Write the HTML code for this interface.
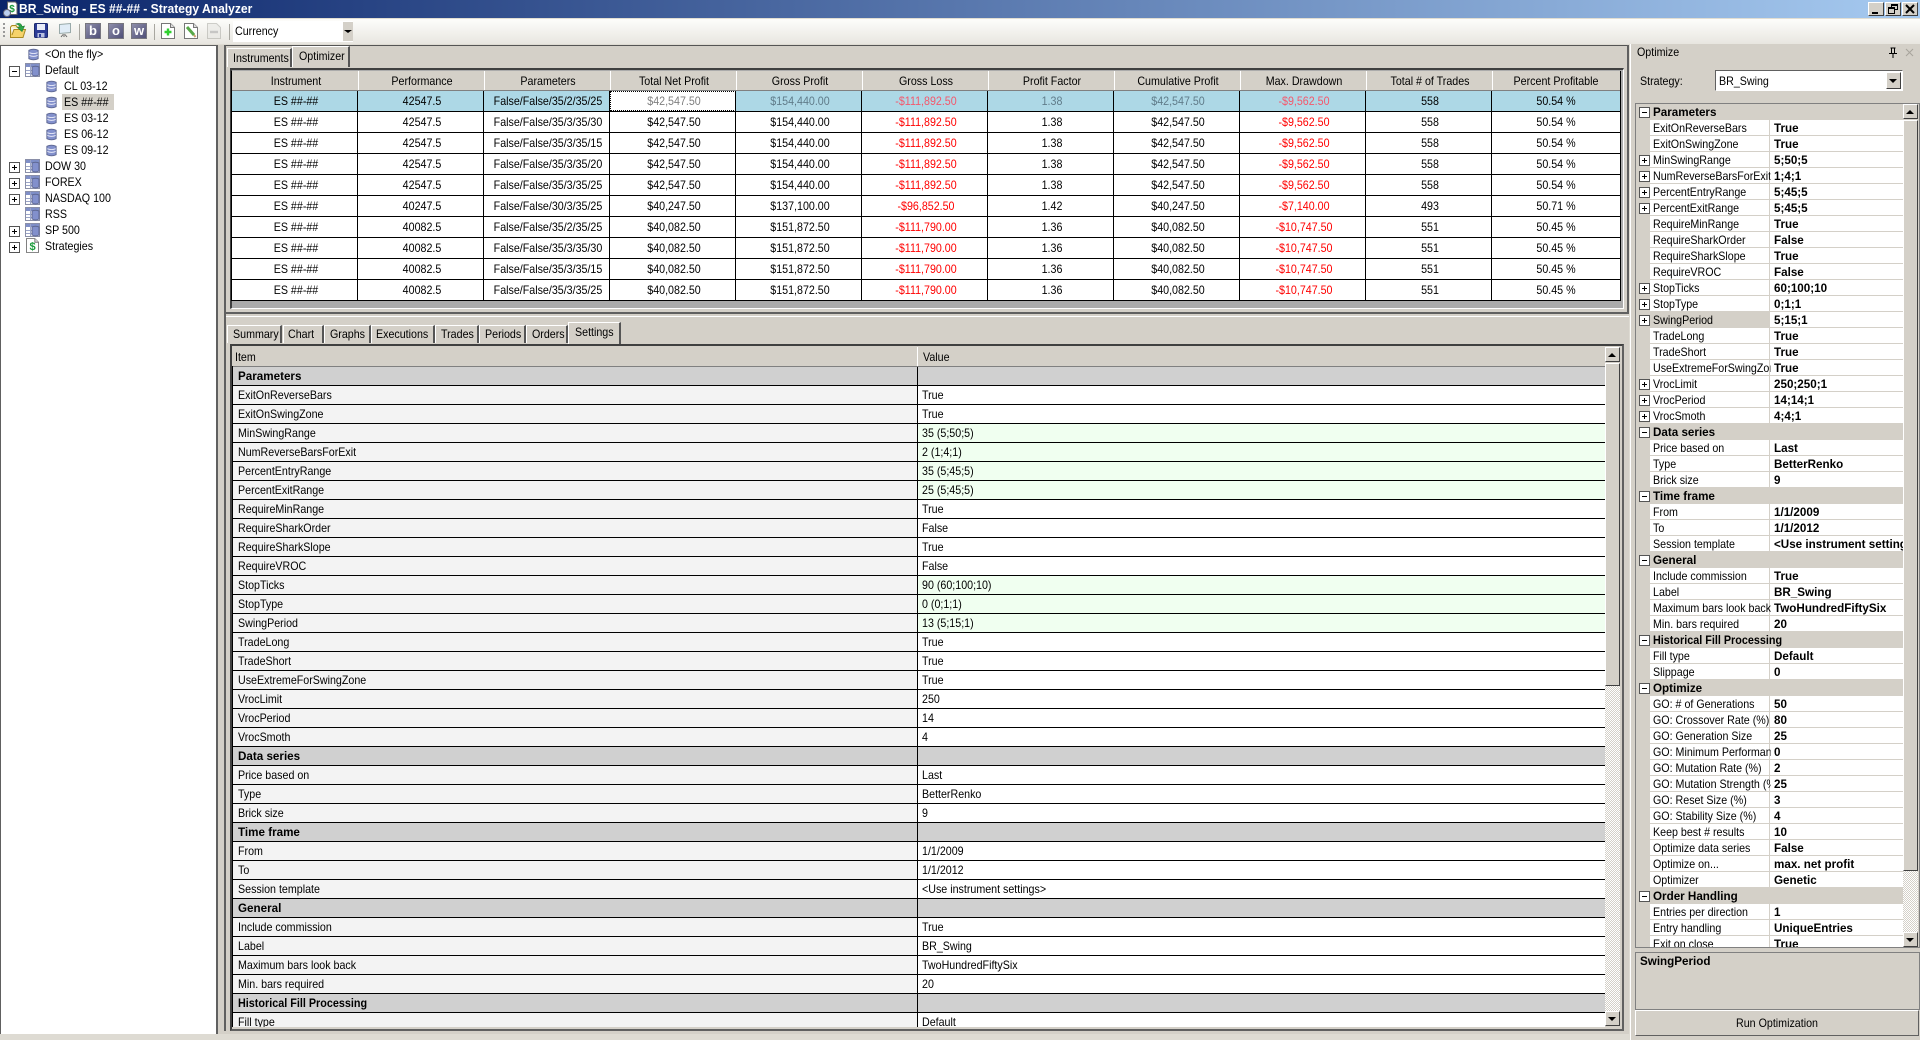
<!DOCTYPE html>
<html><head><meta charset="utf-8"><title>BR_Swing - ES ##-## - Strategy Analyzer</title>
<style>
*{box-sizing:border-box}
html,body{margin:0;padding:0}
body{width:1920px;height:1040px;overflow:hidden;position:relative;background:#dedbd3;font:12px/16px "Liberation Sans",sans-serif;color:#000}
.a{position:absolute}
.t{position:absolute;white-space:nowrap;transform:scaleX(.89);transform-origin:0 50%}
.c{text-align:center;transform-origin:50% 50%}
.bd{font-weight:bold;transform:scaleX(.97)}
.title{left:0;top:0;width:1920px;height:18px;background:linear-gradient(90deg,#0a246a,#a6caf0)}
.tt{left:19px;top:1px;color:#fff;font:bold 13px/16px "Liberation Sans",sans-serif;transform:scaleX(.93)}
.wb{top:2px;width:16px;height:14px;background:#d4d0c8;border:1px solid;border-color:#fff #404040 #404040 #fff}
.bar{left:0;top:18px;width:1920px;height:26px;background:linear-gradient(#fdfdfb,#e8e6e0);border-top:1px solid #e2ded2}
.sep{top:24px;width:1px;height:16px;background:#a8a7a0}
.bw{top:23px;width:16px;height:16px;background:linear-gradient(135deg,#8e8eaa,#4f4f78);border:1px solid #77767f;color:#fff;font:bold 13px/13px "Liberation Sans",sans-serif;text-align:center}
.tree{left:0;top:45px;width:216px;height:989px;background:#fff;border-left:1px solid #606060;border-top:1px solid #606060}
.tr{position:absolute;height:16px}
.x::before{content:"";position:absolute;width:9px;height:9px;border:1px solid #555;background:linear-gradient(#000,#000) center/5px 1px no-repeat,linear-gradient(#000,#000) center/1px 5px no-repeat,#fff}
.m::before{content:"";position:absolute;width:9px;height:9px;border:1px solid #555;background:linear-gradient(#000,#000) center/5px 1px no-repeat,#fff}
.tree .x::before,.tree .m::before{left:8px;top:4px}
.gg{left:230px;top:68px;width:1394px;height:241px;background:#ababab;border-top:2px solid #404040;border-left:2px solid #404040;border-right:1px solid #fff;border-bottom:1px solid #fff}
.h{left:232px;top:71px;width:1388px;height:20px;background:#d4d0c8;border-bottom:1px solid #808080}
.h .t{top:2px;width:126px}
.g{left:232px;top:91px;width:1388px}
.g .r{position:relative;height:21px;background:#fff;border-bottom:1px solid #000}
.g .r .t{top:2px;width:126px}
.k .t:nth-child(1){left:1px}.k .t:nth-child(2){left:127px}.k .t:nth-child(3){left:253px}.k .t:nth-child(4){left:379px}.k .t:nth-child(5){left:505px}.k .t:nth-child(6){left:631px}.k .t:nth-child(7){left:757px}.k .t:nth-child(8){left:883px}.k .t:nth-child(9){left:1009px}.k .t:nth-child(10){left:1135px}.k .t:nth-child(11){left:1261px}
.g .t:nth-child(6),.g .t:nth-child(9){color:#f00}
.g .r.s{background:#add8e6}
.v{width:1px;background:#000}
.hv{width:1px;height:19px;background:#fff;top:71px}
.ph{top:1px}
.tab{background:#d4d0c8;border-top:1px solid #fff;border-left:1px solid #fff;border-right:2px solid #555}
.ig{left:232px;top:347px;width:1373px;height:20px;background:#d4d0c8;border-bottom:1px solid #808080}
.l{left:233px;top:367px;width:1372px;height:660px;overflow:hidden}
.l .r{position:relative;height:19px;background:linear-gradient(90deg,#f3f3f3 684px,#000 684px,#000 685px,#fff 685px);border-bottom:1px solid #000}
.l .r .t{top:1px;left:5px}
.l .r .t+.t{left:689px}
.l .q{background:linear-gradient(90deg,#f3f3f3 684px,#000 684px,#000 685px,#f0fff0 685px)}
.l .o{background:linear-gradient(90deg,#d0d0d0 684px,#000 684px,#000 685px,#d0d0d0 685px)}
.l .o .t{font-weight:bold;transform:scaleX(.97)}
.btn{background:#d4d0c8;border:1px solid;border-color:#fff #404040 #404040 #fff}
.tri{position:absolute;left:3px;width:0;height:0;border-left:4px solid transparent;border-right:4px solid transparent}
.up{border-bottom:4px solid #000;top:5px}.dn{border-top:4px solid #000;top:5px}
.chk{background:repeating-conic-gradient(#fff 0 25%,#d4d0c8 0 50%) 0 0/2px 2px}
.rp{left:1630px;top:44px;width:290px;height:996px;background:#d4d0c8;border-left:1px solid #fff}
.pg{left:1636px;top:104px;width:267px;height:843px;overflow:hidden;background:#d4d0c8}
.pg .r{position:relative;height:16px;background:linear-gradient(90deg,#d4d0c8 14px,#fff 14px,#fff 133px,#d4d0c8 133px,#d4d0c8 134px,#fff 134px);border-bottom:1px solid #d4d0c8}
.pg .r .t{left:17px;top:0;max-width:132px;overflow:hidden}
.pg .r .t+.t{left:138px;max-width:none;font-weight:bold;transform:scaleX(.97)}
.pg .o{background:#d4d0c8!important;height:16px}
.pg .r.o .t{font-weight:bold;transform:scaleX(.97);max-width:none}
.pg .x::before,.pg .m::before{left:3px;top:3px}
.pg .y{background:linear-gradient(90deg,#d4d0c8 134px,#fff 134px)}
</style></head><body>
<svg width="0" height="0" style="position:absolute"><defs>
<symbol id="db" viewBox="0 0 11 14"><path d="M.5 2.500Q5.500 0 10.500 2.500V11.500Q5.500 14 .5 11.500Z" fill="#8290cc" stroke="#5d6690"/><path d="M1 5Q5.500 7 10 5M1 8Q5.500 10 10 8" fill="none" stroke="#e8eaf8"/></symbol>
<symbol id="ls" viewBox="0 0 15 14"><rect x=".5" y=".5" width="14" height="13" fill="#fff" stroke="#8a8fa8"/><rect x="1" y="1" width="13" height="3" fill="#7f8fc8"/><path d="M5.500 1V13M1 7.500H14M1 10.500H14" stroke="#9aa4c8"/><path d="M7 4Q10.500 2.500 14 4V12Q10.500 14 7 12Z" fill="#8290cc" stroke="#5d6690"/></symbol>
<symbol id="doc" viewBox="0 0 14 16"><path d="M.5.5H9.500L13.500 4.500V15.500H.5Z" fill="#fff" stroke="#777"/><path d="M9.500.5V4.500H13.500" fill="#ddd" stroke="#777"/></symbol>
</defs></svg>

<div class="a title"></div>
<svg class="a" style="left:2px;top:1px" width="16" height="17"><path d="M5.500 1H13.500L15 3V13.500H5.500Z" fill="#fff" stroke="#666"/><text x="10" y="11" font-family="Liberation Sans" font-size="10" font-weight="bold" fill="#1a9a3a" text-anchor="middle">$</text><circle cx="5" cy="12" r="3.500" fill="#bcd0f0" stroke="#667"/></svg>
<div class="a t tt" style="transform-origin:0 50%">BR_Swing - ES ##-## - Strategy Analyzer</div>
<div class="a wb" style="left:1868px"><div class="a" style="left:3px;top:9px;width:6px;height:2px;background:#000"></div></div>
<div class="a wb" style="left:1885px"><div class="a" style="left:5px;top:1px;width:7px;height:6px;border:1px solid #000;border-top-width:2px"></div><div class="a" style="left:2px;top:4px;width:7px;height:7px;border:1px solid #000;border-top-width:2px;background:#d4d0c8"></div></div>
<div class="a wb" style="left:1902px"><svg class="a" style="left:2px;top:1px" width="10" height="10"><path d="M1 1L9 9M9 1L1 9" stroke="#000" stroke-width="2"/></svg></div>

<div class="a bar"></div>
<div class="a" style="left:3px;top:23px;width:2px;height:15px;background:repeating-linear-gradient(#999 0 2px,transparent 2px 4px)"></div>
<svg class="a" style="left:9px;top:21px" width="18" height="18"><path d="M1.500 6V16.500H14L16.500 8.500H5L3 14" fill="#f6d36a" stroke="#a98a22"/><path d="M1.500 6L3 4.500H7L8 6H13V8" fill="#fbe9a0" stroke="#a98a22"/><path d="M7 3Q12 1 13 5.500L15.500 5L13 10.500L8.500 6.500L11 6Q10 3.500 7 3Z" fill="#2ea84a" stroke="#1a7a30" stroke-width=".6"/></svg>
<svg class="a" style="left:34px;top:23px" width="14" height="15"><rect x=".5" y=".5" width="13" height="14" rx="1" fill="#2c3c96" stroke="#1c2a70"/><rect x="3" y="1" width="8" height="6" fill="#e8ecf8"/><rect x="3.500" y="10" width="7" height="4.500" fill="#b8c0e0"/><rect x="5" y="11" width="2" height="3" fill="#2c3c96"/></svg>
<svg class="a" style="left:58px;top:23px" width="14" height="15"><path d="M1.500 1.500L12.500 .5V9.500L1.500 10.500Z" fill="#e0ecf6" stroke="#9aa"/><path d="M6 11V14M3 14L5 11.500M9 14L7 11.500" stroke="#666" fill="none"/></svg>
<div class="a sep" style="left:79px"></div>
<div class="a bw" style="left:85px">b</div><div class="a bw" style="left:108px">o</div><div class="a bw" style="left:131px">w</div>
<div class="a sep" style="left:154px"></div>
<svg class="a" style="left:161px;top:23px" width="14" height="16"><use href="#doc"/><path d="M7 5.500V12.500M3.500 9H10.500" stroke="#30d030" stroke-width="2.400"/></svg>
<svg class="a" style="left:184px;top:23px" width="14" height="16"><use href="#doc"/><path d="M3 4L10 12" stroke="#58a848" stroke-width="3"/><path d="M10 12L11.500 14" stroke="#d0a070" stroke-width="2"/></svg>
<svg class="a" style="left:207px;top:23px;opacity:.6" width="14" height="16"><path d="M.5.500H9.500L13.500 4.500V15.500H.5Z" fill="#e8e8e4" stroke="#b0b0aa"/><path d="M3 9H11" stroke="#aaa" stroke-width="2.400"/></svg>
<div class="a sep" style="left:229px"></div>
<div class="a" style="left:233px;top:21px;width:120px;height:21px;background:#fff"></div>
<div class="a" style="left:343px;top:22px;width:10px;height:19px;background:#d4d0c8"><div class="tri dn" style="left:1px;top:8px;border-width:3px 4px 0;"></div></div>
<div class="a t" style="left:235px;top:23px">Currency</div>

<div class="a tree">
<div class="a" style="left:61px;top:48px;width:52px;height:16px;background:#d4d0c8"></div>
<div class="tr" style="left:0;top:0"><svg class="a" style="left:27px;top:2px" width="11" height="13"><use href="#db"/></svg><span class="t" style="left:44px">&lt;On the fly&gt;</span></div>
<div class="tr m" style="left:0;top:16px"><svg class="a" style="left:24px;top:1px" width="15" height="14"><use href="#ls"/></svg><span class="t" style="left:44px">Default</span></div>
<div class="tr" style="left:0;top:32px"><svg class="a" style="left:45px;top:2px" width="11" height="13"><use href="#db"/></svg><span class="t" style="left:63px">CL 03-12</span></div>
<div class="tr" style="left:0;top:48px"><svg class="a" style="left:45px;top:2px" width="11" height="13"><use href="#db"/></svg><span class="t" style="left:63px">ES ##-##</span></div>
<div class="tr" style="left:0;top:64px"><svg class="a" style="left:45px;top:2px" width="11" height="13"><use href="#db"/></svg><span class="t" style="left:63px">ES 03-12</span></div>
<div class="tr" style="left:0;top:80px"><svg class="a" style="left:45px;top:2px" width="11" height="13"><use href="#db"/></svg><span class="t" style="left:63px">ES 06-12</span></div>
<div class="tr" style="left:0;top:96px"><svg class="a" style="left:45px;top:2px" width="11" height="13"><use href="#db"/></svg><span class="t" style="left:63px">ES 09-12</span></div>
<div class="tr x" style="left:0;top:112px"><svg class="a" style="left:24px;top:1px" width="15" height="14"><use href="#ls"/></svg><span class="t" style="left:44px">DOW 30</span></div>
<div class="tr x" style="left:0;top:128px"><svg class="a" style="left:24px;top:1px" width="15" height="14"><use href="#ls"/></svg><span class="t" style="left:44px">FOREX</span></div>
<div class="tr x" style="left:0;top:144px"><svg class="a" style="left:24px;top:1px" width="15" height="14"><use href="#ls"/></svg><span class="t" style="left:44px">NASDAQ 100</span></div>
<div class="tr" style="left:0;top:160px"><svg class="a" style="left:24px;top:1px" width="15" height="14"><use href="#ls"/></svg><span class="t" style="left:44px">RSS</span></div>
<div class="tr x" style="left:0;top:176px"><svg class="a" style="left:24px;top:1px" width="15" height="14"><use href="#ls"/></svg><span class="t" style="left:44px">SP 500</span></div>
<div class="tr x" style="left:0;top:192px"><svg class="a" style="left:25px;top:0" width="13" height="15"><use href="#doc"/><text x="6.500" y="12" font-family="Liberation Sans" font-size="11" font-weight="bold" fill="#1a9a3a" text-anchor="middle">$</text></svg><span class="t" style="left:44px">Strategies</span></div>
</div>

<div class="a" style="left:216px;top:45px;width:1413px;height:989px;background:#d4d0c8"></div>
<div class="a" style="left:216px;top:45px;width:2px;height:989px;background:#606060"></div>
<div class="a" style="left:224px;top:45px;width:2px;height:986px;background:#606060"></div>
<div class="a" style="left:226px;top:45px;width:1403px;height:1px;background:#555"></div>

<div class="a tab" style="left:227px;top:48px;width:65px;height:19px"></div>
<div class="a tab" style="left:292px;top:46px;width:58px;height:21px"></div>
<div class="a t" style="left:233px;top:50px">Instruments</div>
<div class="a t" style="left:299px;top:48px">Optimizer</div>

<div class="a gg"></div>
<div class="a h k">
<span class="t c ph">Instrument</span><span class="t c ph">Performance</span><span class="t c ph">Parameters</span><span class="t c ph">Total Net Profit</span><span class="t c ph">Gross Profit</span><span class="t c ph">Gross Loss</span><span class="t c ph">Profit Factor</span><span class="t c ph">Cumulative Profit</span><span class="t c ph">Max. Drawdown</span><span class="t c ph">Total # of Trades</span><span class="t c ph">Percent Profitable</span>
</div>
<div class="a g k">
<div class="r s"><div class="a" style="left:378px;top:0;width:126px;height:20px;background:#fff;border:1px dotted #000"></div></div>
<div class="a" style="left:0;top:0;width:1388px;height:20px"><span class="t c" style="top:2px;width:126px">ES ##-##</span><span class="t c" style="top:2px;width:126px">42547.5</span><span class="t c" style="top:2px;width:126px">False/False/35/2/35/25</span><span class="t c" style="top:2px;width:126px;color:#808080">$42,547.50</span><span class="t c" style="top:2px;width:126px;color:#607c8a">$154,440.00</span><span class="t c" style="top:2px;width:126px;color:#f4586c">-$111,892.50</span><span class="t c" style="top:2px;width:126px;color:#607c8a">1.38</span><span class="t c" style="top:2px;width:126px;color:#607c8a">$42,547.50</span><span class="t c" style="top:2px;width:126px;color:#f4586c">-$9,562.50</span><span class="t c" style="top:2px;width:126px">558</span><span class="t c" style="top:2px;width:126px">50.54 %</span></div>
<div class="r"><span class="t c">ES ##-##</span><span class="t c">42547.5</span><span class="t c">False/False/35/3/35/30</span><span class="t c">$42,547.50</span><span class="t c">$154,440.00</span><span class="t c">-$111,892.50</span><span class="t c">1.38</span><span class="t c">$42,547.50</span><span class="t c">-$9,562.50</span><span class="t c">558</span><span class="t c">50.54 %</span></div>
<div class="r"><span class="t c">ES ##-##</span><span class="t c">42547.5</span><span class="t c">False/False/35/3/35/15</span><span class="t c">$42,547.50</span><span class="t c">$154,440.00</span><span class="t c">-$111,892.50</span><span class="t c">1.38</span><span class="t c">$42,547.50</span><span class="t c">-$9,562.50</span><span class="t c">558</span><span class="t c">50.54 %</span></div>
<div class="r"><span class="t c">ES ##-##</span><span class="t c">42547.5</span><span class="t c">False/False/35/3/35/20</span><span class="t c">$42,547.50</span><span class="t c">$154,440.00</span><span class="t c">-$111,892.50</span><span class="t c">1.38</span><span class="t c">$42,547.50</span><span class="t c">-$9,562.50</span><span class="t c">558</span><span class="t c">50.54 %</span></div>
<div class="r"><span class="t c">ES ##-##</span><span class="t c">42547.5</span><span class="t c">False/False/35/3/35/25</span><span class="t c">$42,547.50</span><span class="t c">$154,440.00</span><span class="t c">-$111,892.50</span><span class="t c">1.38</span><span class="t c">$42,547.50</span><span class="t c">-$9,562.50</span><span class="t c">558</span><span class="t c">50.54 %</span></div>
<div class="r"><span class="t c">ES ##-##</span><span class="t c">40247.5</span><span class="t c">False/False/30/3/35/25</span><span class="t c">$40,247.50</span><span class="t c">$137,100.00</span><span class="t c">-$96,852.50</span><span class="t c">1.42</span><span class="t c">$40,247.50</span><span class="t c">-$7,140.00</span><span class="t c">493</span><span class="t c">50.71 %</span></div>
<div class="r"><span class="t c">ES ##-##</span><span class="t c">40082.5</span><span class="t c">False/False/35/2/35/25</span><span class="t c">$40,082.50</span><span class="t c">$151,872.50</span><span class="t c">-$111,790.00</span><span class="t c">1.36</span><span class="t c">$40,082.50</span><span class="t c">-$10,747.50</span><span class="t c">551</span><span class="t c">50.45 %</span></div>
<div class="r"><span class="t c">ES ##-##</span><span class="t c">40082.5</span><span class="t c">False/False/35/3/35/30</span><span class="t c">$40,082.50</span><span class="t c">$151,872.50</span><span class="t c">-$111,790.00</span><span class="t c">1.36</span><span class="t c">$40,082.50</span><span class="t c">-$10,747.50</span><span class="t c">551</span><span class="t c">50.45 %</span></div>
<div class="r"><span class="t c">ES ##-##</span><span class="t c">40082.5</span><span class="t c">False/False/35/3/35/15</span><span class="t c">$40,082.50</span><span class="t c">$151,872.50</span><span class="t c">-$111,790.00</span><span class="t c">1.36</span><span class="t c">$40,082.50</span><span class="t c">-$10,747.50</span><span class="t c">551</span><span class="t c">50.45 %</span></div>
<div class="r"><span class="t c">ES ##-##</span><span class="t c">40082.5</span><span class="t c">False/False/35/3/35/25</span><span class="t c">$40,082.50</span><span class="t c">$151,872.50</span><span class="t c">-$111,790.00</span><span class="t c">1.36</span><span class="t c">$40,082.50</span><span class="t c">-$10,747.50</span><span class="t c">551</span><span class="t c">50.45 %</span></div>
</div>
<div class="a" style="left:231px;top:71px;width:1px;height:230px;background:#000"></div>
<div class="a v" style="left:357px;top:91px;height:210px"></div><div class="a v" style="left:483px;top:91px;height:210px"></div><div class="a v" style="left:609px;top:91px;height:210px"></div><div class="a v" style="left:735px;top:91px;height:210px"></div><div class="a v" style="left:861px;top:91px;height:210px"></div><div class="a v" style="left:987px;top:91px;height:210px"></div><div class="a v" style="left:1113px;top:91px;height:210px"></div><div class="a v" style="left:1239px;top:91px;height:210px"></div><div class="a v" style="left:1365px;top:91px;height:210px"></div><div class="a v" style="left:1491px;top:91px;height:210px"></div><div class="a v" style="left:1620px;top:71px;height:230px"></div>
<div class="a hv" style="left:358px"></div><div class="a hv" style="left:484px"></div><div class="a hv" style="left:610px"></div><div class="a hv" style="left:736px"></div><div class="a hv" style="left:862px"></div><div class="a hv" style="left:988px"></div><div class="a hv" style="left:1114px"></div><div class="a hv" style="left:1240px"></div><div class="a hv" style="left:1366px"></div><div class="a hv" style="left:1492px"></div>
<div class="a" style="left:1627px;top:45px;width:2px;height:269px;background:#606060"></div>
<div class="a" style="left:224px;top:312px;width:1405px;height:2px;background:#606060"></div>
<div class="a" style="left:226px;top:316px;width:1403px;height:1px;background:#fff"></div>

<div class="a tab" style="left:227px;top:325px;width:55px;height:18px"></div>
<div class="a tab" style="left:283px;top:325px;width:41px;height:18px"></div>
<div class="a tab" style="left:324px;top:325px;width:47px;height:18px"></div>
<div class="a tab" style="left:371px;top:325px;width:64px;height:18px"></div>
<div class="a tab" style="left:435px;top:325px;width:44px;height:18px"></div>
<div class="a tab" style="left:479px;top:325px;width:47px;height:18px"></div>
<div class="a tab" style="left:526px;top:325px;width:42px;height:18px"></div>
<div class="a tab" style="left:568px;top:322px;width:53px;height:22px"></div>
<div class="a t" style="left:233px;top:326px">Summary</div><div class="a t" style="left:288px;top:326px">Chart</div><div class="a t" style="left:330px;top:326px">Graphs</div><div class="a t" style="left:376px;top:326px">Executions</div><div class="a t" style="left:441px;top:326px">Trades</div><div class="a t" style="left:485px;top:326px">Periods</div><div class="a t" style="left:532px;top:326px">Orders</div><div class="a t" style="left:575px;top:324px">Settings</div>

<div class="a" style="left:230px;top:344px;width:1394px;height:687px;background:#d4d0c8;border-top:2px solid #404040;border-left:2px solid #404040;border-right:2px solid #606060;border-bottom:2px solid #606060"></div>
<div class="a ig"></div>
<div class="a t" style="left:235px;top:349px">Item</div><div class="a t" style="left:923px;top:349px">Value</div>
<div class="a" style="left:917px;top:347px;width:1px;height:19px;background:#fff"></div>
<div class="a l">
<div class="r o"><span class="t">Parameters</span></div>
<div class="r"><span class="t">ExitOnReverseBars</span><span class="t">True</span></div>
<div class="r"><span class="t">ExitOnSwingZone</span><span class="t">True</span></div>
<div class="r q"><span class="t">MinSwingRange</span><span class="t">35 (5;50;5)</span></div>
<div class="r q"><span class="t">NumReverseBarsForExit</span><span class="t">2 (1;4;1)</span></div>
<div class="r q"><span class="t">PercentEntryRange</span><span class="t">35 (5;45;5)</span></div>
<div class="r q"><span class="t">PercentExitRange</span><span class="t">25 (5;45;5)</span></div>
<div class="r"><span class="t">RequireMinRange</span><span class="t">True</span></div>
<div class="r"><span class="t">RequireSharkOrder</span><span class="t">False</span></div>
<div class="r"><span class="t">RequireSharkSlope</span><span class="t">True</span></div>
<div class="r"><span class="t">RequireVROC</span><span class="t">False</span></div>
<div class="r q"><span class="t">StopTicks</span><span class="t">90 (60;100;10)</span></div>
<div class="r q"><span class="t">StopType</span><span class="t">0 (0;1;1)</span></div>
<div class="r q"><span class="t">SwingPeriod</span><span class="t">13 (5;15;1)</span></div>
<div class="r"><span class="t">TradeLong</span><span class="t">True</span></div>
<div class="r"><span class="t">TradeShort</span><span class="t">True</span></div>
<div class="r"><span class="t">UseExtremeForSwingZone</span><span class="t">True</span></div>
<div class="r"><span class="t">VrocLimit</span><span class="t">250</span></div>
<div class="r"><span class="t">VrocPeriod</span><span class="t">14</span></div>
<div class="r"><span class="t">VrocSmoth</span><span class="t">4</span></div>
<div class="r o"><span class="t">Data series</span></div>
<div class="r"><span class="t">Price based on</span><span class="t">Last</span></div>
<div class="r"><span class="t">Type</span><span class="t">BetterRenko</span></div>
<div class="r"><span class="t">Brick size</span><span class="t">9</span></div>
<div class="r o"><span class="t">Time frame</span></div>
<div class="r"><span class="t">From</span><span class="t">1/1/2009</span></div>
<div class="r"><span class="t">To</span><span class="t">1/1/2012</span></div>
<div class="r"><span class="t">Session template</span><span class="t">&lt;Use instrument settings&gt;</span></div>
<div class="r o"><span class="t">General</span></div>
<div class="r"><span class="t">Include commission</span><span class="t">True</span></div>
<div class="r"><span class="t">Label</span><span class="t">BR_Swing</span></div>
<div class="r"><span class="t">Maximum bars look back</span><span class="t">TwoHundredFiftySix</span></div>
<div class="r"><span class="t">Min. bars required</span><span class="t">20</span></div>
<div class="r o"><span class="t" style="transform:scaleX(.9)">Historical Fill Processing</span></div>
<div class="r"><span class="t">Fill type</span><span class="t">Default</span></div>
</div>
<div class="a" style="left:232px;top:366px;width:1px;height:661px;background:#000"></div>
<div class="a btn" style="left:1605px;top:347px;width:15px;height:15px"><div class="tri up" style="left:2px"></div></div>
<div class="a btn" style="left:1605px;top:363px;width:15px;height:323px"></div>
<div class="a chk" style="left:1605px;top:686px;width:15px;height:325px"></div>
<div class="a btn" style="left:1605px;top:1011px;width:15px;height:15px"><div class="tri dn" style="left:2px"></div></div>

<div class="a rp"></div>
<div class="a t" style="left:1637px;top:44px">Optimize</div>
<svg class="a" style="left:1888px;top:47px" width="10" height="11"><path d="M2.500 1H7.500M3.500 1V6M6.500 1V6M1 6.500H9M5 7V11" stroke="#000" fill="none"/></svg>
<svg class="a" style="left:1905px;top:47px" width="10" height="11"><path d="M1 2L8 9M8 2L1 9" stroke="#a8a49c" fill="none"/></svg>
<div class="a t" style="left:1640px;top:73px">Strategy:</div>
<div class="a" style="left:1715px;top:70px;width:188px;height:21px;background:#fff;border:1px solid;border-color:#606060 #fff #fff #606060"></div>
<div class="a t" style="left:1719px;top:73px">BR_Swing</div>
<div class="a btn" style="left:1886px;top:72px;width:15px;height:17px"><div class="tri dn" style="left:2px;top:6px"></div></div>

<div class="a" style="left:1635px;top:103px;width:285px;height:845px;border:1px solid #808080"></div>
<div class="a pg">
<div class="r o m"><span class="t">Parameters</span></div>
<div class="r"><span class="t">ExitOnReverseBars</span><span class="t">True</span></div>
<div class="r"><span class="t">ExitOnSwingZone</span><span class="t">True</span></div>
<div class="r x"><span class="t">MinSwingRange</span><span class="t">5;50;5</span></div>
<div class="r x"><span class="t">NumReverseBarsForExit</span><span class="t">1;4;1</span></div>
<div class="r x"><span class="t">PercentEntryRange</span><span class="t">5;45;5</span></div>
<div class="r x"><span class="t">PercentExitRange</span><span class="t">5;45;5</span></div>
<div class="r"><span class="t">RequireMinRange</span><span class="t">True</span></div>
<div class="r"><span class="t">RequireSharkOrder</span><span class="t">False</span></div>
<div class="r"><span class="t">RequireSharkSlope</span><span class="t">True</span></div>
<div class="r"><span class="t">RequireVROC</span><span class="t">False</span></div>
<div class="r x"><span class="t">StopTicks</span><span class="t">60;100;10</span></div>
<div class="r x"><span class="t">StopType</span><span class="t">0;1;1</span></div>
<div class="r x y"><span class="t">SwingPeriod</span><span class="t">5;15;1</span></div>
<div class="r"><span class="t">TradeLong</span><span class="t">True</span></div>
<div class="r"><span class="t">TradeShort</span><span class="t">True</span></div>
<div class="r"><span class="t">UseExtremeForSwingZone</span><span class="t">True</span></div>
<div class="r x"><span class="t">VrocLimit</span><span class="t">250;250;1</span></div>
<div class="r x"><span class="t">VrocPeriod</span><span class="t">14;14;1</span></div>
<div class="r x"><span class="t">VrocSmoth</span><span class="t">4;4;1</span></div>
<div class="r o m"><span class="t">Data series</span></div>
<div class="r"><span class="t">Price based on</span><span class="t">Last</span></div>
<div class="r"><span class="t">Type</span><span class="t">BetterRenko</span></div>
<div class="r"><span class="t">Brick size</span><span class="t">9</span></div>
<div class="r o m"><span class="t">Time frame</span></div>
<div class="r"><span class="t">From</span><span class="t">1/1/2009</span></div>
<div class="r"><span class="t">To</span><span class="t">1/1/2012</span></div>
<div class="r"><span class="t">Session template</span><span class="t" style="max-width:137px;overflow:hidden">&lt;Use instrument settings&gt;</span></div>
<div class="r o m"><span class="t">General</span></div>
<div class="r"><span class="t">Include commission</span><span class="t">True</span></div>
<div class="r"><span class="t">Label</span><span class="t">BR_Swing</span></div>
<div class="r"><span class="t">Maximum bars look back</span><span class="t">TwoHundredFiftySix</span></div>
<div class="r"><span class="t">Min. bars required</span><span class="t">20</span></div>
<div class="r o m"><span class="t" style="transform:scaleX(.9)">Historical Fill Processing</span></div>
<div class="r"><span class="t">Fill type</span><span class="t">Default</span></div>
<div class="r"><span class="t">Slippage</span><span class="t">0</span></div>
<div class="r o m"><span class="t">Optimize</span></div>
<div class="r"><span class="t">GO: # of Generations</span><span class="t">50</span></div>
<div class="r"><span class="t">GO: Crossover Rate (%)</span><span class="t">80</span></div>
<div class="r"><span class="t">GO: Generation Size</span><span class="t">25</span></div>
<div class="r"><span class="t">GO: Minimum Performance</span><span class="t">0</span></div>
<div class="r"><span class="t">GO: Mutation Rate (%)</span><span class="t">2</span></div>
<div class="r"><span class="t">GO: Mutation Strength (%)</span><span class="t">25</span></div>
<div class="r"><span class="t">GO: Reset Size (%)</span><span class="t">3</span></div>
<div class="r"><span class="t">GO: Stability Size (%)</span><span class="t">4</span></div>
<div class="r"><span class="t">Keep best # results</span><span class="t">10</span></div>
<div class="r"><span class="t">Optimize data series</span><span class="t">False</span></div>
<div class="r"><span class="t">Optimize on...</span><span class="t">max. net profit</span></div>
<div class="r"><span class="t">Optimizer</span><span class="t">Genetic</span></div>
<div class="r o m"><span class="t">Order Handling</span></div>
<div class="r"><span class="t">Entries per direction</span><span class="t">1</span></div>
<div class="r"><span class="t">Entry handling</span><span class="t">UniqueEntries</span></div>
<div class="r"><span class="t">Exit on close</span><span class="t">True</span></div>
</div>
<div class="a btn" style="left:1903px;top:104px;width:15px;height:15px"><div class="tri up" style="left:2px"></div></div>
<div class="a btn" style="left:1903px;top:120px;width:15px;height:751px"></div>
<div class="a chk" style="left:1903px;top:871px;width:15px;height:62px"></div>
<div class="a btn" style="left:1903px;top:932px;width:15px;height:15px"><div class="tri dn" style="left:2px"></div></div>

<div class="a" style="left:1635px;top:952px;width:285px;height:58px;border:1px solid #808080"></div>
<div class="a t bd" style="left:1640px;top:953px">SwingPeriod</div>
<div class="a" style="left:1635px;top:1010px;width:284px;height:26px;background:#d4d0c8;border:1px solid;border-color:#fff #606060 #606060 #fff"></div>
<div class="a t c" style="left:1635px;top:1015px;width:284px">Run Optimization</div>
</body></html>
